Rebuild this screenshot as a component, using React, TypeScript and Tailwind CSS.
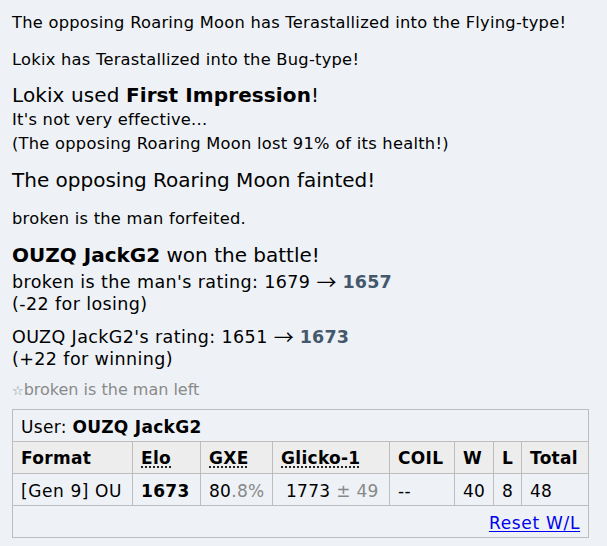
import React from "react";

const font = { fontFamily: '"DejaVu Sans", Verdana, sans-serif' };

const sm = "text-[16.3px] tracking-[0.25px]";
const md = "text-[17.5px] tracking-[0.4px]";
const cell = "border border-[#bdbdbd] px-2 pt-[6.5px] pb-[4.5px] whitespace-nowrap";
const head = "border border-[#bdbdbd] px-2 pt-[6px] pb-[5px] text-left font-bold whitespace-nowrap";

function Arrow() {
  return (
    <span className="relative top-[2px] font-['Noto_Sans_CJK_JP',sans-serif] text-[20px] leading-none tracking-normal mx-[6px]">
      →
    </span>
  );
}

export default function App() {
  return (
    <div
      className="w-full h-[546px] bg-[#eef2f6] text-black pl-3 pt-[11px] overflow-hidden"
      style={font}
    >
      <div className={`${sm} leading-[23px]`}>
        The opposing Roaring Moon has Terastallized into the Flying-type!
      </div>
      <div className={`${sm} leading-[23px] mt-[14px]`}>
        Lokix has Terastallized into the Bug-type!
      </div>
      <div className="mt-[11px]">
        <div className="text-[20px] leading-[26px] tracking-[0.1px]">
          Lokix used <strong className="font-bold">First Impression</strong>!
        </div>
        <div className={`${sm} leading-[24px]`}>It's not very effective...</div>
        <div className={`${sm} leading-[24px]`}>
          (The opposing Roaring Moon lost 91% of its health!)
        </div>
      </div>
      <div className="text-[20px] leading-[26px] mt-[11px]">
        The opposing Roaring Moon fainted!
      </div>
      <div className={`${sm} leading-[23px] mt-[14px]`}>
        broken is the man forfeited.
      </div>
      <div className="text-[20px] leading-[26px] mt-[12px]">
        <strong className="font-bold">OUZQ JackG2</strong> won the battle!
      </div>
      <div className={`${md} leading-[23px] mt-[2px]`}>
        <div className="h-[23px]">
          broken is the man's rating: 1679<Arrow />
          <strong className="font-bold text-[#44586c] tracking-[0.2px]">1657</strong>
        </div>
        <div>(-22 for losing)</div>
      </div>
      <div className={`${md} leading-[23px] mt-[9px]`}>
        <div className="h-[23px]">
          OUZQ JackG2's rating: 1651<Arrow />
          <strong className="font-bold text-[#44586c] tracking-[0.2px]">1673</strong>
        </div>
        <div>(+22 for winning)</div>
      </div>
      <div className="text-[16px] leading-[23px] mt-[7px] text-[#8a8a8a]">
        <span className="text-[13px]">☆</span>broken is the man left
      </div>

      <table className="mt-[7px] w-[576px] table-fixed border-collapse border border-[#bdbdbd] text-[17px] leading-[20px] tracking-[0.3px]">
        <colgroup>
          <col className="w-[120px]" />
          <col className="w-[68px]" />
          <col className="w-[72px]" />
          <col className="w-[117px]" />
          <col className="w-[65px]" />
          <col className="w-[39px]" />
          <col className="w-[28px]" />
          <col className="w-[67px]" />
        </colgroup>
        <tbody>
          <tr>
            <td colSpan={8} className={`${cell} text-left`}>
              User: <strong className="font-bold">OUZQ JackG2</strong>
            </td>
          </tr>
          <tr className="bg-[#ededed]">
            <th className={head}>Format</th>
            <th className={head}>
              <span className="underline decoration-dotted underline-offset-[3px]">Elo</span>
            </th>
            <th className={head}>
              <span className="underline decoration-dotted underline-offset-[3px]">GXE</span>
            </th>
            <th className={head}>
              <span className="underline decoration-dotted underline-offset-[3px]">Glicko-1</span>
            </th>
            <th className={head}>COIL</th>
            <th className={head}>W</th>
            <th className={head}>L</th>
            <th className={head}>Total</th>
          </tr>
          <tr>
            <td className={`${cell} tracking-[0.6px]`}>[Gen 9] OU</td>
            <td className={cell}>
              <strong className="font-bold">1673</strong>
            </td>
            <td className={cell}>
              80<span className="text-[#888888]">.8%</span>
            </td>
            <td className="border border-[#bdbdbd] pl-[13px] pr-2 pt-[6.5px] pb-[4.5px] whitespace-nowrap">
              1773<span className="text-[#888888]"> ± 49</span>
            </td>
            <td className={cell}>--</td>
            <td className={cell}>40</td>
            <td className={cell}>8</td>
            <td className={cell}>48</td>
          </tr>
          <tr>
            <td colSpan={8} className={`${cell} text-right`}>
              <a href="#" className="text-[#0000ee] underline underline-offset-[2px] tracking-[0.7px]">
                Reset W/L
              </a>
            </td>
          </tr>
        </tbody>
      </table>
    </div>
  );
}
